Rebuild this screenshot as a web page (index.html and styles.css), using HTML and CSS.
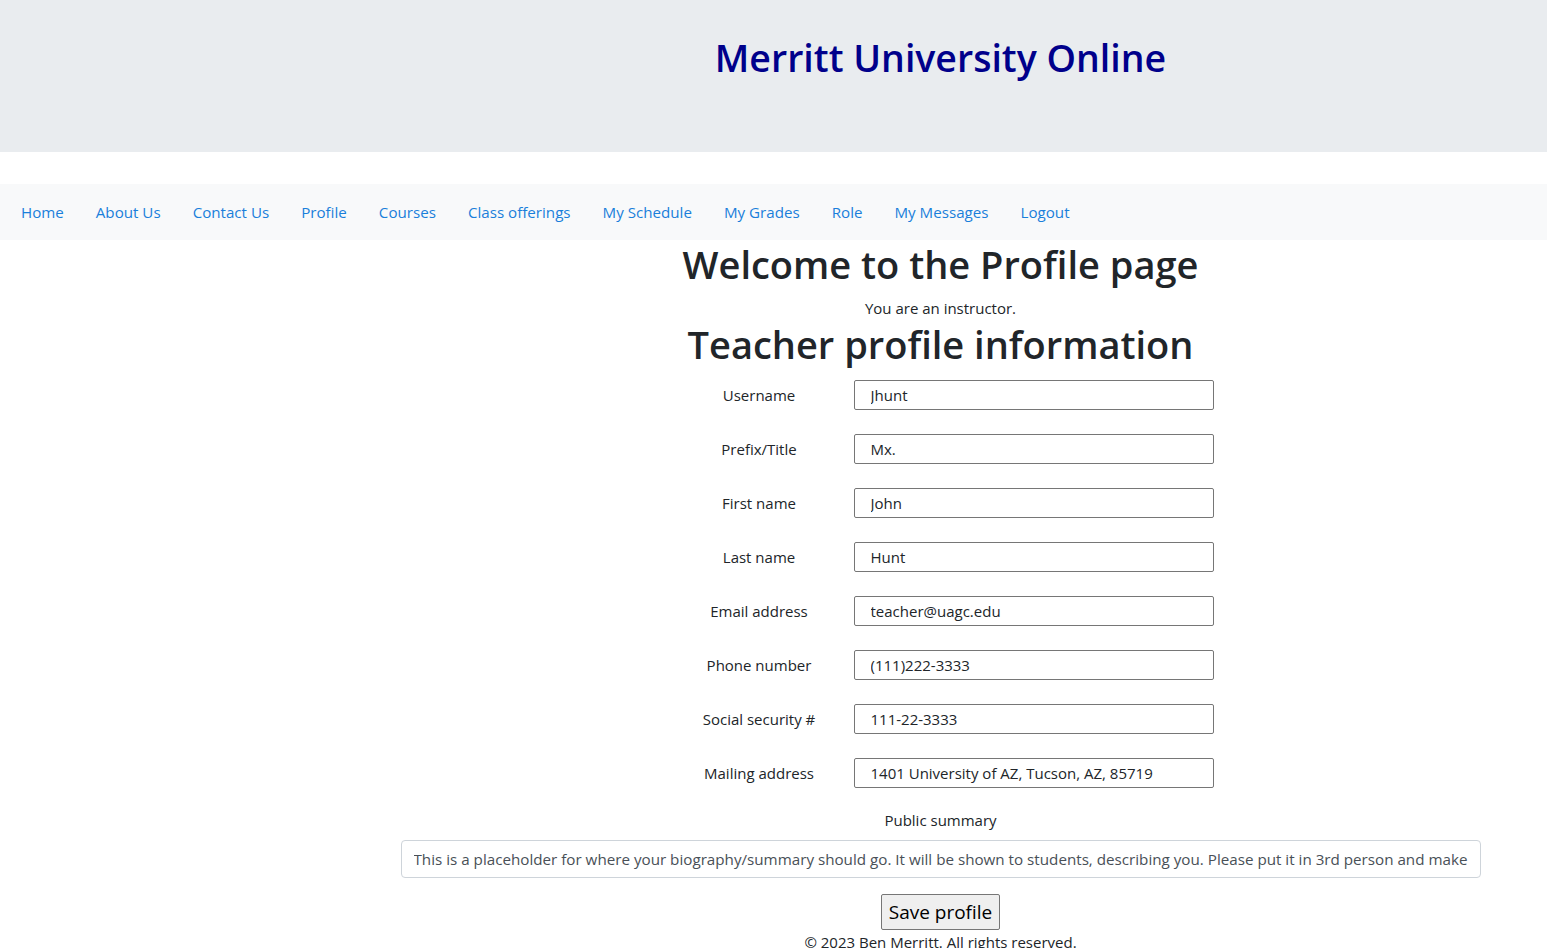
FILE: index.html
```html
<!DOCTYPE html>
<html lang="en">
<head>
<meta charset="utf-8">
<title>Profile - Merritt University Online</title>
<link rel="stylesheet" href="styles.css">
</head>
<body>
<header class="banner">
  <div class="banner-inner">
    <h1 class="site-title">Merritt University Online</h1>
  </div>
</header>
<nav class="navbar">
  <a class="nav-link" href="#">Home</a>
  <a class="nav-link" href="#">About Us</a>
  <a class="nav-link" href="#">Contact Us</a>
  <a class="nav-link" href="#">Profile</a>
  <a class="nav-link" href="#">Courses</a>
  <a class="nav-link" href="#">Class offerings</a>
  <a class="nav-link" href="#">My Schedule</a>
  <a class="nav-link" href="#">My Grades</a>
  <a class="nav-link" href="#">Role</a>
  <a class="nav-link" href="#">My Messages</a>
  <a class="nav-link" href="#">Logout</a>
</nav>
<main class="main">
  <h1 class="page-title">Welcome to the Profile page</h1>
  <p class="role-note">You are an instructor.</p>
  <h1 class="page-title">Teacher profile information</h1>
  <form class="profile-form">
    <div class="fields">
      <div class="field"><label class="field-label">Username</label><input class="field-input" type="text" value="Jhunt"></div>
      <div class="field"><label class="field-label">Prefix/Title</label><input class="field-input" type="text" value="Mx."></div>
      <div class="field"><label class="field-label">First name</label><input class="field-input" type="text" value="John"></div>
      <div class="field"><label class="field-label">Last name</label><input class="field-input" type="text" value="Hunt"></div>
      <div class="field"><label class="field-label">Email address</label><input class="field-input" type="text" value="teacher@uagc.edu"></div>
      <div class="field"><label class="field-label">Phone number</label><input class="field-input" type="text" value="(111)222-3333"></div>
      <div class="field"><label class="field-label">Social security #</label><input class="field-input" type="text" value="111-22-3333"></div>
      <div class="field"><label class="field-label">Mailing address</label><input class="field-input" type="text" value="1401 University of AZ, Tucson, AZ, 85719"></div>
    </div>
    <div class="summary-label">Public summary</div>
    <input class="summary-input" type="text" value="This is a placeholder for where your biography/summary should go. It will be shown to students, describing you. Please put it in 3rd person and make it sound professional.">
    <button class="save-btn" type="button">Save profile</button>
  </form>
  <footer class="footer">© 2023 Ben Merritt. All rights reserved.</footer>
</main>
</body>
</html>
```
FILE: styles.css
```css
* { box-sizing: border-box; }
html, body { margin: 0; padding: 0; }
body {
  font-family: "Open Sans", "Noto Sans", "Liberation Sans", sans-serif;
  font-size: 15px;
  line-height: 24px;
  color: #212529;
  background: #fff;
}
.banner {
  background: #e9ecef;
  height: 152px;
  margin-bottom: 32px;
  padding-top: 34px;
}
.banner-inner {
  padding-left: 334px;
  text-align: center;
}
.site-title {
  margin: 0;
  font-size: 37.5px;
  line-height: 48px;
  font-weight: 600;
  color: #00008b;
}
.navbar {
  background: #f8f9fa;
  height: 56px;
  display: flex;
  align-items: center;
  padding-left: 5px;
}
.nav-link {
  color: #1a7fdb;
  text-decoration: none;
  padding: 0 16px;
  font-size: 15.15px;
}
.main {
  padding-left: 334px;
  text-align: center;
}
.page-title {
  margin: 0 0 8px;
  font-size: 38px;
  line-height: 48px;
  font-weight: 600;
}
.role-note {
  margin: 0;
  font-size: 15px;
}
.profile-form {
  display: flex;
  flex-direction: column;
  align-items: center;
}
.fields {
  display: flex;
  flex-direction: column;
  gap: 24px;
  padding-top: 4px;
  width: 546px;
}
.field {
  display: flex;
  align-items: center;
  height: 30px;
}
.field-label {
  width: 183px;
  text-align: center;
  font-size: 15px;
}
.field-input {
  margin-left: 3px;
  width: 360px;
  height: 30px;
  border: 1px solid #767676;
  border-radius: 2px;
  padding: 0 16px;
  font-family: inherit;
  font-size: 15px;
  color: #212529;
  background: #fff;
}
.summary-label {
  margin-top: 20px;
  font-size: 15px;
}
.summary-input {
  margin-top: 8px;
  width: 1080px;
  height: 38px;
  border: 1px solid #ced4da;
  border-radius: 4px;
  padding: 0 12px;
  font-family: inherit;
  font-size: 15.2px;
  color: #495057;
  background: #fff;
}
.save-btn {
  margin-top: 16px;
  height: 36px;
  padding: 0 7px;
  font-family: inherit;
  font-size: 19px;
  color: #000;
  background: #efefef;
  border: 1px solid #767676;
  border-radius: 2px;
}
.footer {
  font-size: 15px;
  line-height: 24px;
}
```
